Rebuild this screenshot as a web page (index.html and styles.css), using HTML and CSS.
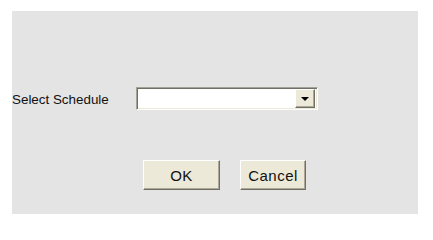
FILE: index.html
```html
<!DOCTYPE html>
<html>
<head>
<meta charset="utf-8">
<link rel="stylesheet" href="styles.css">
</head>
<body>
<div class="panel">
  <div class="row">
    <span class="label">Select Schedule</span>
    <div class="select">
      <div class="field"></div>
      <div class="arrow"><svg width="8" height="4" viewBox="0 0 8 4"><path d="M0 0H8L4 4Z" fill="#000"/></svg></div>
    </div>
  </div>
  <div class="buttons">
    <button class="btn ok">OK</button>
    <button class="btn cancel">Cancel</button>
  </div>
</div>
</body>
</html>
```

FILE: styles.css
```css
html, body {
  margin: 0;
  padding: 0;
  background: #ffffff;
}
body {
  font-family: "Liberation Sans", Arial, sans-serif;
}
.panel {
  margin: 11px 0 0 12px;
  width: 406px;
  height: 203px;
  background: #e4e4e4;
  display: flex;
  flex-direction: column;
}
.row {
  display: flex;
  align-items: center;
  margin-top: 76px;
  height: 23px;
}
.label {
  width: 124px;
  font-size: 13.4px;
  color: #111;
  line-height: 23px;
  margin-top: 1px;
}
.select {
  box-sizing: border-box;
  width: 182px;
  height: 23px;
  border-style: solid;
  border-width: 1px;
  border-color: #a3a297 #ffffff #ffffff #a3a297;
  box-shadow: inset 1px 1px 0 #716f64, inset -1px -1px 0 #ece9d8;
  background: #ffffff;
  display: flex;
  padding: 1px 2px 1px 1px;
}
.field {
  flex: 1;
}
.arrow {
  box-sizing: border-box;
  width: 20px;
  height: 19px;
  background: #ece9d8;
  border-style: solid;
  border-width: 1px;
  border-color: #ffffff #716f64 #716f64 #ffffff;
  box-shadow: inset -1px -1px 0 #aca899;
  display: flex;
  align-items: center;
  justify-content: center;
}
.arrow svg {
  display: block;
  margin-top: 1px;
}
.buttons {
  display: flex;
  gap: 20px;
  margin-top: 50px;
  padding-left: 131px;
}
.btn {
  box-sizing: border-box;
  height: 30px;
  padding: 0;
  margin: 0;
  font-family: "Liberation Sans", Arial, sans-serif;
  font-size: 15px;
  color: #111;
  background: #ece9d8;
  border-style: solid;
  border-width: 1px;
  border-color: #ffffff #716f64 #716f64 #ffffff;
  box-shadow: inset -1px -1px 0 #aca899;
  letter-spacing: 0.5px;
}
.ok {
  width: 77px;
}
.cancel {
  width: 66px;
}
```
